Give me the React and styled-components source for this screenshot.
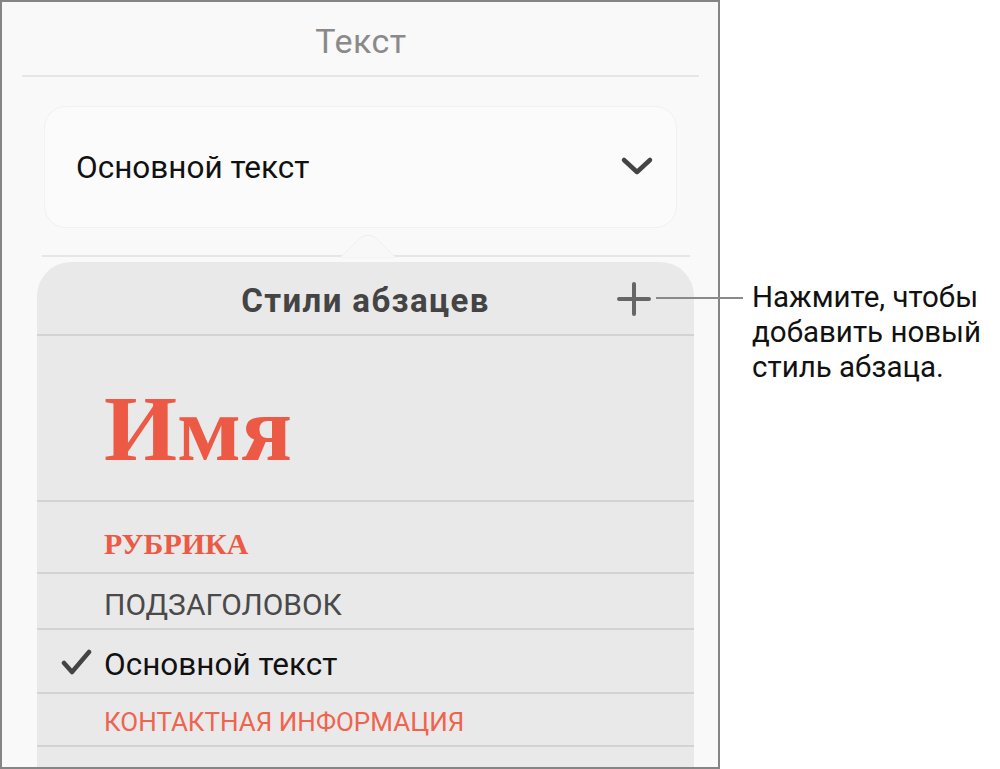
import React from "react";
import styled, { createGlobalStyle } from "styled-components";

const GlobalStyle = createGlobalStyle`
  html, body {
    margin: 0;
    padding: 0;
    background: #ffffff;
  }
  body {
    font-family: Roboto, "Liberation Sans", sans-serif;
  }
`;

const Page = styled.div`
  display: flex;
  align-items: flex-start;
  width: 1000px;
  height: 769px;
  overflow: hidden;
`;

const Frame = styled.div`
  position: relative;
  display: flex;
  flex-direction: column;
  width: 716px;
  height: 765px;
  border: 2px solid #858585;
  background: #f9f9f9;
  overflow: hidden;
  flex-shrink: 0;
`;

const Title = styled.div`
  height: 73px;
  display: flex;
  align-items: center;
  justify-content: center;
  font-size: 34px;
  letter-spacing: 0.5px;
  color: #8a8a8a;
  padding-left: 2px;
  padding-top: 4px;
  box-sizing: border-box;
`;

const Divider = styled.div`
  height: 2px;
  background: ${(p) => p.color || "#e6e6e6"};
  margin: ${(p) => p.margin || "0"};
`;

const StyleCard = styled.div`
  margin: 29px 41px 0 42px;
  height: 120px;
  border-radius: 22px;
  border: 1px solid #f1f1f1;
  background: #fbfbfb;
  display: flex;
  align-items: center;
  justify-content: space-between;
  padding: 0 22px 0 31px;
  font-size: 31.5px;
  color: #111;
`;

const NotchRow = styled.div`
  position: relative;
  margin: 27px 28px 0 40px;
  height: 2px;
  background: #e6e6e6;
`;

const Notch = styled.svg`
  position: absolute;
  left: 298px;
  top: -21px;
`;

const Popover = styled.div`
  flex: 1;
  margin: 5px 24px 0 35px;
  background: #e9e9e9;
  border-radius: 34px 34px 0 0;
  display: flex;
  flex-direction: column;
`;

const PopHeader = styled.div`
  height: 72px;
  display: grid;
  grid-template-columns: 1fr auto 1fr;
  align-items: center;
  border-bottom: 2px solid #d3d3d3;
`;

const PopTitle = styled.div`
  grid-column: 2;
  font-size: 33px;
  letter-spacing: 1.4px;
  font-weight: 700;
  color: #444;
  padding-top: 4px;
`;

const PlusCell = styled.div`
  grid-column: 3;
  justify-self: end;
  display: flex;
  padding-right: 43px;
  padding-top: 2px;
`;

const StyleRow = styled.div`
  height: ${(p) => p.h}px;
  display: flex;
  align-items: center;
  padding-left: 67px;
  border-bottom: 2px solid #d3d3d3;
  position: relative;
  flex-shrink: 0;
`;

const Check = styled.svg`
  position: absolute;
  left: 24px;
  top: 50%;
  margin-top: -12px;
`;

const NameStyle = styled.span`
  font-family: "Liberation Serif", "DejaVu Serif", serif;
  font-weight: 700;
  font-size: 94px;
  color: #ec5a45;
  padding-top: 20px;
`;

const RubricStyle = styled.span`
  font-family: "Liberation Serif", "DejaVu Serif", serif;
  font-weight: 700;
  font-size: 30px;
  color: #ec5a45;
  padding-top: 14px;
`;

const SubtitleStyle = styled.span`
  font-size: 30px;
  color: #4a4a4a;
  padding-top: 6px;
`;

const BodyStyle = styled.span`
  font-size: 31.5px;
  color: #111;
  padding-top: 6px;
`;

const ContactStyle = styled.span`
  font-size: 26px;
  color: #f0634e;
  padding-top: 4px;
`;

const Callout = styled.div`
  position: relative;
  margin-left: 32px;
  margin-top: 280px;
  font-size: 29.5px;
  line-height: 35px;
  color: #111;
`;

const Leader = styled.div`
  position: absolute;
  left: -96px;
  top: 17px;
  width: 87px;
  height: 2px;
  background: #8a8a8a;
`;

function Chevron() {
  return (
    <svg width="34" height="22" viewBox="0 0 34 22">
      <path
        d="M4 4 L17 16 L30 4"
        fill="none"
        stroke="#444"
        strokeWidth="4.5"
        strokeLinecap="round"
        strokeLinejoin="round"
      />
    </svg>
  );
}

function Plus() {
  return (
    <svg width="34" height="34" viewBox="0 0 34 34">
      <path
        d="M17 2 V32 M2 17 H32"
        stroke="#666"
        strokeWidth="4"
        strokeLinecap="round"
      />
    </svg>
  );
}

export default function App() {
  return (
    <Page>
      <GlobalStyle />
      <Frame>
        <Title>Текст</Title>
        <Divider margin="0 19px 0 20px" />
        <StyleCard>
          <span>Основной текст</span>
          <Chevron />
        </StyleCard>
        <NotchRow>
          <Notch width="56" height="24" viewBox="0 0 56 24">
            <path
              d="M0 24 L20 4 Q28 -2 36 4 L56 24 Z"
              fill="#f8f8f8"
              stroke="#f0f0f0"
              strokeWidth="1"
            />
          </Notch>
        </NotchRow>
        <Popover>
          <PopHeader>
            <PopTitle>Стили абзацев</PopTitle>
            <PlusCell>
              <Plus />
            </PlusCell>
          </PopHeader>
          <StyleRow h={164}>
            <NameStyle>Имя</NameStyle>
          </StyleRow>
          <StyleRow h={70}>
            <RubricStyle>РУБРИКА</RubricStyle>
          </StyleRow>
          <StyleRow h={54}>
            <SubtitleStyle>ПОДЗАГОЛОВОК</SubtitleStyle>
          </StyleRow>
          <StyleRow h={62}>
            <Check width="32" height="26" viewBox="0 0 32 26">
              <path
                d="M3 14 L11 23 L28 3"
                fill="none"
                stroke="#444"
                strokeWidth="4.5"
                strokeLinecap="round"
                strokeLinejoin="round"
              />
            </Check>
            <BodyStyle>Основной текст</BodyStyle>
          </StyleRow>
          <StyleRow h={51}>
            <ContactStyle>КОНТАКТНАЯ ИНФОРМАЦИЯ</ContactStyle>
          </StyleRow>
        </Popover>
      </Frame>
      <Callout>
        <Leader />
        Нажмите, чтобы
        <br />
        добавить новый
        <br />
        стиль абзаца.
      </Callout>
    </Page>
  );
}
